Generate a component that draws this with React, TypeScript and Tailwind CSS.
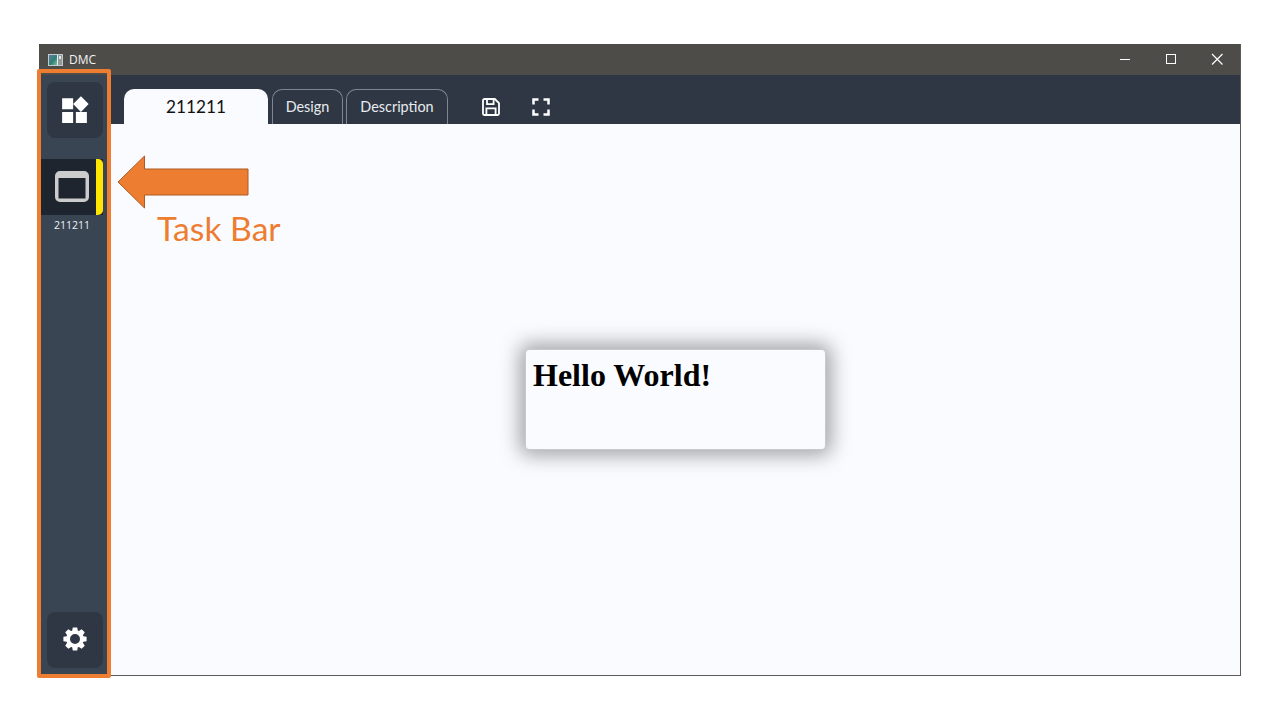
import React from "react";
import { MdWidgets, MdFullscreen } from "react-icons/md";

function AppIcon() {
  return (
    <svg width="15" height="12" viewBox="0 0 15 12" className="mr-[6px]">
      <defs>
        <linearGradient id="appGrad" x1="0" y1="0" x2="1" y2="1">
          <stop offset="0" stopColor="#5d7f9e" />
          <stop offset="0.55" stopColor="#2f7f78" />
          <stop offset="1" stopColor="#7fc59a" />
        </linearGradient>
      </defs>
      <rect width="15" height="12" fill="#c4c8ca" />
      <rect x="1" y="1" width="8" height="10" fill="url(#appGrad)" />
      <rect x="9" y="1" width="1" height="10" fill="#e8ecec" />
      <rect x="10" y="1" width="4" height="10" fill="#8f9a9c" />
      <rect x="11" y="2" width="2" height="3" fill="#e0e4e4" />
    </svg>
  );
}

function Arrow() {
  return (
    <svg width="134" height="54" viewBox="0 0 134 54" className="block">
      <path d="M1 27 L27.5 1 L27.5 14 L131 14 L131 40 L27.5 40 L27.5 53 Z" fill="#ed7d31" stroke="#ae5a21" strokeWidth="1" />
    </svg>
  );
}

function WindowIcon() {
  return (
    <svg width="34" height="31" viewBox="0 0 34 31" className="ml-[14px] mt-[-2px]">
      <path fillRule="evenodd" fill="#cccccc" d="M5 0 H29 A5 5 0 0 1 34 5 V26 A5 5 0 0 1 29 31 H5 A5 5 0 0 1 0 26 V5 A5 5 0 0 1 5 0 Z M3.5 7 V27.5 H30.5 V7 Z" />
    </svg>
  );
}

function SaveIcon() {
  return (
    <svg width="18" height="18" viewBox="0 0 18 18" fill="none" stroke="#fff" strokeWidth="1.8">
      <path d="M2.5 1 H12.8 L17 5.2 V15.5 A1.5 1.5 0 0 1 15.5 17 H2.5 A1.5 1.5 0 0 1 1 15.5 V2.5 A1.5 1.5 0 0 1 2.5 1 Z" />
      <path d="M5 1 V6.2 H11.6 V1" />
      <path d="M4.4 17 V10.4 H13.6 V17" />
    </svg>
  );
}

function gearPath() {
  const c = 12;
  const teeth = 8;
  const ro = 11.8;
  const ri = 8.8;
  const pts: string[] = [];
  for (let i = 0; i < teeth; i++) {
    const a = (i * 2 * Math.PI) / teeth - Math.PI / 2;
    const step = (2 * Math.PI) / teeth;
    [[ri, -0.42], [ro, -0.24], [ro, 0.24], [ri, 0.42]].forEach(([r, t]) => {
      const b = a + t * step;
      pts.push(`${(c + r * Math.cos(b)).toFixed(2)} ${(c + r * Math.sin(b)).toFixed(2)}`);
    });
  }
  return `M${pts.join(" L")} Z M12 7 A5 5 0 1 0 12 17 A5 5 0 1 0 12 7 Z`;
}

function GearIcon() {
  return (
    <svg width="24" height="24" viewBox="0 0 24 24" className="mb-[2px]">
      <path d={gearPath()} fill="#fff" fillRule="evenodd" />
    </svg>
  );
}

export default function App() {
  return (
    <div className="relative h-[720px] w-[1280px] overflow-hidden bg-white pl-[39px] pt-[44px] font-['Lato','Liberation_Sans',sans-serif]">
      <div className="flex h-[632px] w-[1202px] flex-col border-b border-r border-[#5a5a5a]">
        <div className="flex h-[31px] shrink-0 items-center bg-[#4e4c49] pl-[9px] text-[#f2f2f2]">
          <AppIcon />
          <span className="font-['Open_Sans','Liberation_Sans',sans-serif] text-[12px]">DMC</span>
          <div className="ml-auto flex h-full items-center">
            <svg width="46" height="31" viewBox="0 0 46 31"><path d="M18 15.5 H28" stroke="#fff" strokeWidth="1" /></svg>
            <svg width="46" height="31" viewBox="0 0 46 31"><rect x="18.5" y="10.5" width="9" height="9" fill="none" stroke="#fff" strokeWidth="1" /></svg>
            <svg width="46" height="31" viewBox="0 0 46 31"><path d="M18 10 L28.5 20.5 M28.5 10 L18 20.5" stroke="#fff" strokeWidth="1.2" /></svg>
          </div>
        </div>
        <div className="flex min-h-0 flex-1">
          <aside className="flex w-[71px] shrink-0 flex-col bg-[#3a4553] pl-[2px]">
            <div className="ml-[6px] mt-[7px] flex h-[56px] w-[56px] items-center justify-center rounded-[8px] bg-[#2f3744]">
              <MdWidgets className="mr-[1px] text-white" size={33} />
            </div>
            <div className="relative mt-[21px] flex h-[56px] w-[62px] items-center bg-[#1f252e]">
              <WindowIcon />
              <div className="absolute right-0 top-0 h-full w-[7px] rounded-r-[5px] bg-[#ffe600]" />
            </div>
            <div className="mt-[4px] w-[62px] text-center font-['Open_Sans','Liberation_Sans',sans-serif] text-[10.5px] leading-[13px] text-[#eef2f6]">211211</div>
            <div className="ml-[6px] mb-[7px] mt-auto flex h-[56px] w-[56px] items-center justify-center rounded-[8px] bg-[#2f3744]">
              <GearIcon />
            </div>
          </aside>
          <main className="flex min-w-0 flex-1 flex-col bg-[#fafbff]">
            <div className="flex h-[49px] shrink-0 items-end bg-[#2f3744] pl-[14px]">
              <div className="flex h-[35px] w-[144px] items-center justify-center rounded-t-[10px] bg-[#fafbff] text-[17.2px] text-[#111]">211211</div>
              <div className="ml-[4px] flex h-[35px] w-[71px] items-center justify-center rounded-t-[10px] border border-b-0 border-[#7d8693] text-[14.4px] text-[#e8ebef]">Design</div>
              <div className="ml-[3px] flex h-[35px] w-[102px] items-center justify-center rounded-t-[10px] border border-b-0 border-[#7d8693] text-[14.4px] text-[#e8ebef]">Description</div>
              <div className="ml-[34px] flex h-[35px] items-center text-white">
                <SaveIcon />
                <MdFullscreen size={30} className="ml-[26px]" />
              </div>
            </div>
            <div className="relative flex-1">
              <div className="absolute left-[415px] top-[225px] h-[101px] w-[301px] rounded-[4px] border border-[#c9c9cd] bg-[#fafbff] px-[7px] py-[6px] font-['Liberation_Serif',serif] shadow-[0_0_20px_5px_rgba(0,0,0,0.36)]">
                <h1 className="text-[32px] font-bold leading-[38px] text-black">Hello World!</h1>
              </div>
            </div>
          </main>
        </div>
      </div>

      <div className="pointer-events-none absolute left-[37px] top-[69px] h-[609px] w-[74px] rounded-[2px] border-4 border-[#ed7d31]" />
      <div className="pointer-events-none absolute left-[117px] top-[155px]"><Arrow /></div>
      <div className="pointer-events-none absolute left-[157px] top-[207px] text-[33.7px] leading-[42px] text-[#ed7d31]">Task Bar</div>
    </div>
  );
}
